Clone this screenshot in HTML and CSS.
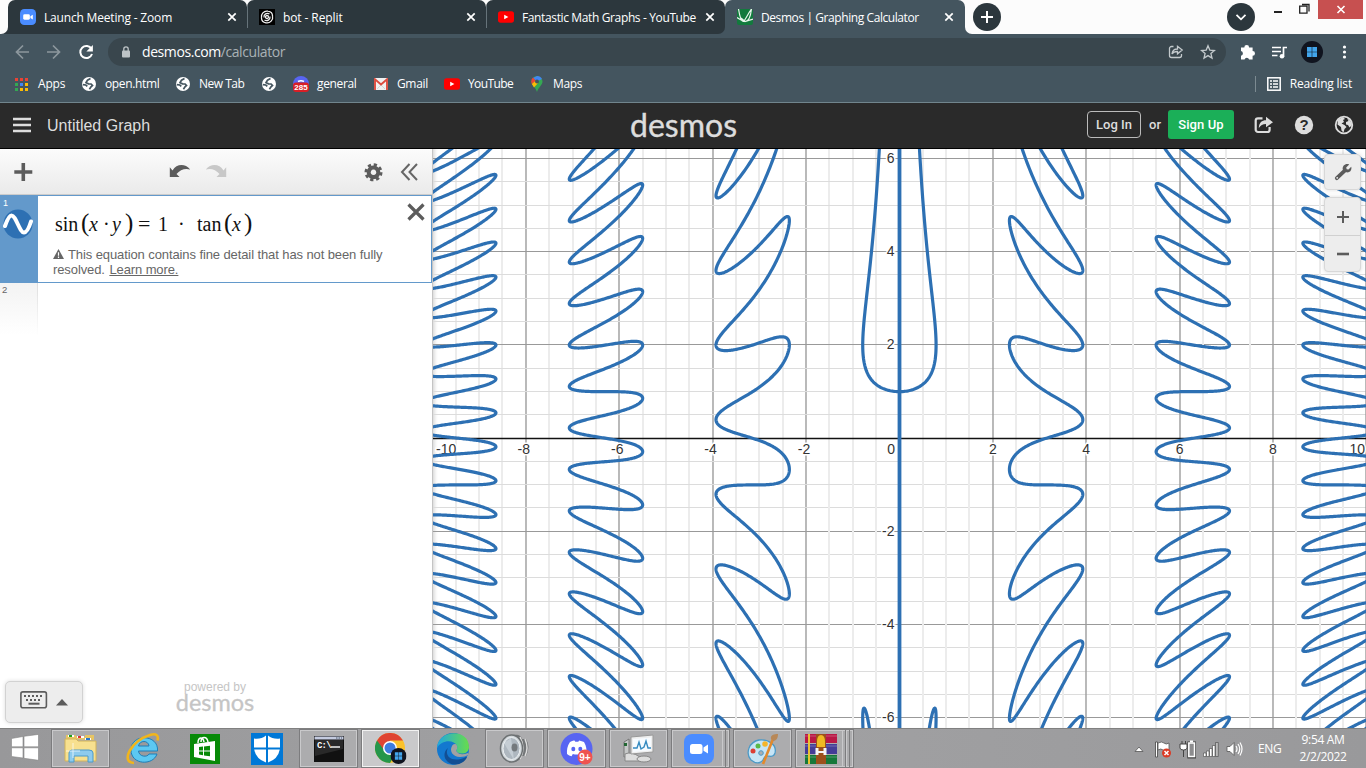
FILE: index.html
```html
<!DOCTYPE html>
<html lang="en">
<head>
<meta charset="utf-8">
<title>Desmos | Graphing Calculator</title>
<link rel="stylesheet" href="styles.css">
</head>
<body>
<svg class="defs" width="0" height="0">
  <symbol id="close" viewBox="0 0 10 10"><path d="M1.3 1.3l7.4 7.4M8.7 1.3L1.3 8.7" stroke="#fff" stroke-width="1.7"/></symbol>
  <symbol id="globe" viewBox="0 0 14 14"><circle cx="7" cy="7" r="7" fill="#fff"/><path d="M8.500 1.500L5.500 3.200 4 5.600l2.500 1.200 2.600.2 1.400 1.400-1.500 1.400-1.600 2.400M.8 7.600l3 .4 1.500 1.300" fill="none" stroke="#44555f" stroke-width="1.700"/></symbol>
  <symbol id="tube" viewBox="0 0 16 12"><rect y=".3" width="16" height="11.4" rx="2.6" fill="#f00"/><path d="M6.2 3.7v4.6L10.4 6z" fill="#fff"/></symbol>
  <symbol id="camera" viewBox="0 0 30 30"><rect width="30" height="30" rx="8" fill="#4a8cff"/><rect x="6" y="10" width="12.5" height="10" rx="2.5" fill="#fff"/><path d="M19.5 13.5L24 10.6v9L19.5 16.7z" fill="#fff"/></symbol>
  <symbol id="winlogo" viewBox="0 0 22 22"><circle cx="11" cy="11" r="11" fill="#10141f"/><path d="M6 6h4.7v4.7H6zM11.3 6H16v4.7h-4.7zM6 11.3h4.7V16H6zM11.3 11.3H16V16h-4.7z" fill="#42a5ec"/></symbol>
</svg>

<header class="tabstrip">
  <div class="edge-left"><i></i></div>
  <div class="tab"><svg width="16" height="16"><use href="#camera"/></svg><span class="t1">Launch Meeting - Zoom</span><svg class="x" width="10" height="10"><use href="#close"/></svg></div>
  <div class="tab split"><svg width="16" height="16" viewBox="0 0 16 16"><rect width="16" height="16" fill="#000"/><g fill="none" stroke="#eee" stroke-width="1.300"><circle cx="8" cy="8" r="1.500"/><path d="M5 8.500C4.500 5 8 3.500 10.500 5M11 7.500c.5 3.500-3 5-5.500 3.500M2.500 9C1.500 5 5 1.500 9 2.200M13.500 7c1 4-2.500 7.500-6.500 6.800M9 2.200c3 .5 4.500 2.500 4.500 4.800M7 13.800c-3-.5-4.500-2.500-4.500-4.800"/></g></svg><span class="t2">bot - Replit</span><svg class="x" width="10" height="10"><use href="#close"/></svg></div>
  <div class="tab split"><svg width="16" height="12"><use href="#tube"/></svg><span class="t3">Fantastic Math Graphs - YouTube</span><svg class="x" width="10" height="10"><use href="#close"/></svg></div>
  <div class="tab active"><svg width="16" height="16" viewBox="0 0 16 16"><rect width="16" height="16" rx="2" fill="#127a3d"/><path d="M1.500 0C2.500 6 4 12.500 6 12.500S10 6 14.500 0M0 8.500c3 1.500 5 4 8 4s5.500-4 6.500-12.500M4 9l4 3.500L16 10" fill="none" stroke="#e9f6ed" stroke-width="1.200"/></svg><span class="t4">Desmos | Graphing Calculator</span><svg class="x" width="10" height="10"><use href="#close"/></svg></div>
  <div class="edge-right">
    <svg class="newtab" width="28" height="28" viewBox="0 0 28 28"><circle cx="14" cy="14" r="14" fill="#2c373d"/><path d="M14 8v12M8 14h12" stroke="#fff" stroke-width="2"/></svg>
    <svg class="search" width="28" height="28" viewBox="0 0 28 28"><circle cx="14" cy="14" r="14" fill="#2c373d"/><path d="M9.500 11.800l4.500 4.500 4.500-4.500" fill="none" stroke="#fff" stroke-width="1.800"/></svg>
    <svg class="win" width="92" height="19" viewBox="0 0 92 19"><path d="M0 12h8" stroke="#222" stroke-width="2"/><path d="M25.700 6.200h7.300v7h-7.300zM28 4.500h7v7" fill="none" stroke="#222" stroke-width="1.300"/><path d="M44 0h45v19H44z" fill="#c75050"/><path d="M63.500 6l7 7M70.500 6l-7 7" stroke="#fff" stroke-width="1.600"/></svg>
  </div>
</header>

<div class="toolbar">
  <svg class="nav" width="80" height="16" viewBox="0 0 80 16"><g fill="none" stroke="#8c979d" stroke-width="1.700"><path d="M14 8H1.500M8 1.500L1.500 8 8 14.500M32 8h12.500M38 1.500L44.500 8 38 14.500"/></g><path d="M76.500 5A6 6 0 1 0 77 10" fill="none" stroke="#fff" stroke-width="2"/><path d="M77.900 1v6.500h-6.500z" fill="#fff"/></svg>
  <div class="omnibox">
    <svg width="10" height="12" viewBox="0 0 10 12"><rect x="1" y="4.500" width="8" height="7" rx="1" fill="#bdc3c6"/><path d="M2.800 5V3a2.200 2.200 0 0 1 4.400 0v2" fill="none" stroke="#bdc3c6" stroke-width="1.300"/></svg>
    <span class="url">desmos.com<em>/calculator</em></span>
    <svg class="omni-icons" width="48" height="16" viewBox="0 0 48 16"><g fill="none" stroke="#c3c9cc" stroke-width="1.300"><path d="M5.500 2.500H3.500a2 2 0 0 0-2 2v7a2 2 0 0 0 2 2h8a2 2 0 0 0 2-2v-1.500M4 10c.3-3.300 2-5 5.500-5V2.300L14.200 6 9.500 9.800V7.500C7 7.400 5.200 8.200 4 10z"/><path d="M40 1.800l1.800 4.300 4.600.4-3.500 3 1.100 4.600-4-2.500-4 2.500 1.100-4.600-3.500-3 4.600-.4z"/></g></svg>
  </div>
  <svg class="ext" width="110" height="22" viewBox="0 0 110 22"><path d="M1 6.500h3.300a2.400 2.400 0 0 1 4.800 0h3.500V10a2.400 2.400 0 0 1 0 4.800V18.500H9.100a2.400 2.400 0 0 0-4.600 0H1v-3.700a2.400 2.400 0 0 0 0-4.700z" fill="#fff"/><path d="M32 6.500h9M32 10.500h9M32 14.500h5.500M47 6.500h-3.500v9" fill="none" stroke="#fff" stroke-width="1.700"/><circle cx="42" cy="15.300" r="2.300" fill="#fff"/><use href="#winlogo" x="61" width="22" height="22"/><g fill="#fff"><circle cx="104.500" cy="6" r="1.600"/><circle cx="104.500" cy="11" r="1.600"/><circle cx="104.500" cy="16" r="1.600"/></g></svg>
</div>

<nav class="bookmarks">
  <div class="bm b1"><svg width="13" height="13" viewBox="0 0 13 13"><path d="M0 0h3v3H0zM5 0h3v3H5zM10 0h3v3h-3z" fill="#ea4335"/><path d="M0 5h3v3H0zM0 10h3v3H0z" fill="#34a853"/><path d="M5 5h3v3H5z" fill="#4285f4"/><path d="M10 5h3v3h-3zM5 10h3v3H5zM10 10h3v3h-3z" fill="#fbbc05"/></svg><span>Apps</span></div>
  <div class="bm b2"><svg width="14" height="14"><use href="#globe"/></svg><span>open.html</span></div>
  <div class="bm b3"><svg width="14" height="14"><use href="#globe"/></svg><span>New Tab</span></div>
  <div class="bm b4"><svg width="14" height="14"><use href="#globe"/></svg></div>
  <div class="bm b5"><svg width="16" height="16" viewBox="0 0 16 16"><circle cx="8" cy="8" r="8" fill="#5865f2"/><path d="M5 5.500q3-1.500 6 0" stroke="#fff" stroke-width="1.500" fill="none"/><rect y="6.500" width="16" height="9.500" rx="3" fill="#d81f26"/><text x="8" y="14.200" class="badge" text-anchor="middle">285</text></svg><span>general</span></div>
  <div class="bm b6"><svg width="14" height="12" viewBox="0 0 14 12"><rect width="14" height="12" rx="1" fill="#f1f1f1"/><path d="M3 11l4-4 4 4" stroke="#d5d5d5" fill="none"/><path d="M1 12V1.300l6 5.200 6-5.200V12" fill="none" stroke="#dd4b3e" stroke-width="1.900"/></svg><span>Gmail</span></div>
  <div class="bm b7"><svg width="16" height="12"><use href="#tube"/></svg><span>YouTube</span></div>
  <div class="bm b8"><svg width="12" height="16" viewBox="0 0 12 16"><path d="M6 0a5.600 5.600 0 0 0-5.500 5.500C.5 9 4.500 11 6 16c1.500-5 5.500-7 5.500-10.500A5.600 5.600 0 0 0 6 0z" fill="#34a853"/><path d="M6 0a5.600 5.600 0 0 1 5 3L6 5.500 2 2z" fill="#4285f4"/><path d="M2 1.600L5 5 .8 8A5.700 5.700 0 0 1 2 1.600z" fill="#ea4335"/><path d="M.8 8L5 4.500 7 7l-4 4.500z" fill="#fbbc05"/><circle cx="6" cy="5.600" r="2" fill="#44555f"/></svg><span>Maps</span></div>
  <div class="reading"><svg width="14" height="14" viewBox="0 0 14 14"><rect x=".8" y=".8" width="12.400" height="12.400" fill="none" stroke="#fff" stroke-width="1.500"/><path d="M3 4h2M6 4h5M3 7h2M6 7h5M3 10h2M6 10h5" stroke="#fff" stroke-width="1.500"/></svg><span>Reading list</span></div>
</nav>

<div class="appbar">
  <svg class="menu" width="18" height="16" viewBox="0 0 18 16"><path d="M.5 2h17M.5 8h17M.5 14h17" stroke="#ddd" stroke-width="2.400" stroke-linecap="round"/></svg>
  <h1>Untitled Graph</h1>
  <div class="logo">desmos</div>
  <div class="account">
    <a class="login">Log In</a><span class="or">or</span><a class="signup">Sign Up</a>
    <svg width="100" height="20" viewBox="0 0 100 20"><path d="M8.500 3.300H4a2.300 2.300 0 0 0-2.300 2.300v9.100A2.300 2.300 0 0 0 4 17h9.300a2.300 2.300 0 0 0 2.300-2.300V12" fill="none" stroke="#ddd" stroke-width="2.200"/><path d="M4.800 13C5 7.500 8 5.200 12 5.200V1.800l7 5.400-7 5V8.900c-3.500 0-5.200 1-7.200 4.100z" fill="#ddd"/><circle cx="50" cy="10" r="9.200" fill="#ddd"/><text x="50" y="15.300" text-anchor="middle" class="help">?</text><circle cx="90" cy="10" r="8.300" fill="none" stroke="#ddd" stroke-width="1.800"/><path d="M84 4.500l5-2.500 2 2-2 1 1 2-2.500 1.500 3 1.500 2 2-2 2-1 3.500-2-2-.5-3.500-3.500-2.500zM93 3l3.500 3 1.500 4-2.500 2.500-1.500-2.500-2-.5V7l2.500-1z" fill="#ddd"/></svg>
  </div>
</div>

<main>
  <section class="panel">
    <div class="tools">
      <svg width="432" height="45" viewBox="0 0 432 45"><path d="M23.300 14v18M14.300 23h18" stroke="#5c5c5c" stroke-width="3.600"/><path d="M169.800 18.300v9.700h9.700l-3-3c3.500-4.200 8.500-6 13.700-4.500-5-6-13.500-6-17.700 1z" fill="#5c5c5c"/><path d="M226.200 18.300v9.700h-9.700l3-3c-3.500-4.200-8.500-6-13.700-4.500 5-6 13.500-6 17.700 1z" fill="#c8c8c8"/><path fill-rule="evenodd" d="M373.500 16.500a6.800 6.800 0 1 0 .01 0zm0 4a2.800 2.800 0 1 1-.01 0z" fill="#5c5c5c"/><circle cx="373.500" cy="23.300" r="7.500" fill="none" stroke="#5c5c5c" stroke-width="3" stroke-dasharray="3.200 2.690"/><path d="M409.500 15l-7.500 8 7.500 8M417 15l-7.500 8 7.500 8" fill="none" stroke="#666" stroke-width="2"/></svg>
    </div>
    <div class="expr">
      <div class="side"><b>1</b><svg width="30" height="30" viewBox="0 0 30 30"><circle cx="15" cy="15" r="14.500" fill="#2d70b3"/><path d="M2 17C4.500 10 6.500 6.500 8.500 6.500 13 6.500 16.500 23.500 21 23.500 23.500 23.500 26 19 28 12.500" fill="none" stroke="#fff" stroke-width="4" stroke-linecap="round"/></svg></div>
      <div class="body">
        <div class="math"><span class="m-sin">sin</span><span class="par">(</span><i class="m-x">x</i><span class="m-dot">·</span><i class="m-y">y</i><span class="par m-close">)</span><span class="m-eq">=</span><span class="m-one">1</span><span class="m-dot2">·</span><span class="m-tan">tan</span><span class="par">(</span><i class="m-x2">x</i><span class="par">)</span></div>
        <svg class="remove" width="18" height="18" viewBox="0 0 18 18"><path d="M1.500 1.500l15 15M16.500 1.500l-15 15" stroke="#5c5c5c" stroke-width="3.200"/></svg>
        <p class="warn"><svg width="11" height="10" viewBox="0 0 11 10"><path d="M5.500 0L11 10H0z" fill="#666"/><path d="M5.500 3.200v3.500M5.500 7.600v1.300" stroke="#fff" stroke-width="1.200"/></svg><span>This equation contains fine detail that has not been fully</span><br><span>resolved.</span> <a>Learn more.</a></p>
      </div>
    </div>
    <div class="next">2</div>
    <div class="foot">
      <div class="keypad"><svg width="48" height="18" viewBox="0 0 48 18"><rect x=".9" y=".9" width="25.500" height="15.800" rx="2" fill="none" stroke="#5c5c5c" stroke-width="1.600"/><path d="M4 5h20M6 9h16" stroke="#5c5c5c" stroke-width="2" stroke-dasharray="2 2"/><path d="M8.500 12.700h11" stroke="#5c5c5c" stroke-width="2"/><path d="M36 14.500l6-6.500 6 6.500z" fill="#5c5c5c"/></svg></div>
      <div class="powered"><span>powered by</span><b>desmos</b></div>
    </div>
  </section>
  <section class="graph">
    <svg id="plot" width="933" height="579" viewBox="433 149 933 579"></svg>
    <div class="gbtn wrench"><svg width="18" height="18" viewBox="0 0 18 18"><path d="M2.800 15.200L10.500 7.800" stroke="#5c5c5c" stroke-width="3.800" stroke-linecap="round"/><path d="M15.200 1.500l-3 3 .5 1.700 1.800.4 2.700-2.800c1 3-1.200 6.200-4.700 5.500-3.800-.4-5-4-2.800-6.700 1.300-1.500 3.600-2 5.500-1.100z" fill="#5c5c5c"/><circle cx="3.200" cy="14.800" r=".9" fill="#ededed"/></svg></div>
    <div class="gbtn zoomer"><div><svg width="12" height="12"><path d="M6 0v12M0 6h12" stroke="#5c5c5c" stroke-width="2"/></svg></div><div><svg width="12" height="12"><path d="M0 6h12" stroke="#5c5c5c" stroke-width="2.600"/></svg></div></div>
  </section>
</main>

<footer class="taskbar">
  <div class="start"><svg width="28" height="27" viewBox="0 0 28 27"><path d="M.5 4.500l11.500-2v10.300H.5zM13 2.300L27.500.4v12.400H13zM.5 13.800H12V24L.5 22.500zM13 13.800h14.500v12.500L13 24.300z" fill="#fff" stroke="#858585" stroke-width=".6"/></svg></div>
  <div class="app open"><svg width="34" height="32" viewBox="0 0 34 32"><path d="M2 6V2h9l2 2h8V2h9v5z" fill="#e7c564"/><path d="M4 3h6M13 4h7M21 6h6" stroke="#fff" stroke-width="2"/><path d="M5 2h3v2H5z" fill="#1ba01b"/><path d="M14 3h3v2h-3z" fill="#d33"/><path d="M22 5h4v2h-4z" fill="#2878d0"/><path d="M1 6h11l2 2h18v20H1z" fill="#f7e08f" stroke="#d2b35a"/><path d="M5 29v-9q0-3 3-3h17q4 0 4 3v9h-5v-6H10v6z" fill="#8ecbed" stroke="#4d9ac9"/><path d="M9 10v15M2 18h14" stroke="#fff" opacity=".7"/></svg></div>
  <div class="app"><svg width="34" height="34" viewBox="0 0 34 34"><path fill-rule="evenodd" d="M31 22h-8c-1.500 3.500-10 3-10.500-3H31.500C33 2 5 1 5 18c0 15 22 16 26 4zM12.500 14c1-6 10-6 10.500 0z" fill="#5cc8f2" stroke="#1f7fb8"/><path d="M8 31C-6 30 5 9 24 3c6-2 9 0 7.500 5.500" fill="none" stroke="#f1b51c" stroke-width="2.600"/></svg></div>
  <div class="app"><svg width="30" height="30" viewBox="0 0 30 30"><path d="M0 0h30v30H0z" fill="#078a07"/><path d="M4 10l21-3v20L4 23z" fill="#fff"/><path d="M8 9c0-6 5-7 6-1m-3 0c0-6 6-6 7 0" fill="none" stroke="#fff" stroke-width="1.500"/><path d="M9 13l4-.5v4H9zM14 12.400l6-.7v4.800h-6zM9 17.500h4v3.700l-4-.6zM14 17.500h6v4.800l-6-.8z" fill="#078a07"/></svg></div>
  <div class="app"><svg width="32" height="32" viewBox="0 0 32 32"><path d="M0 0h32v32H0z" fill="#0078d7"/><path d="M15 2.500v12H3V5.500q7 1 12-3zM17 2.500q5 4 12 3v9H17zM3.200 16.500H15v13Q5 26 3.200 16.500zM17 16.500h11.800Q27 26 17 29.500z" fill="#fff"/></svg></div>
  <div class="app open"><svg width="30" height="26" viewBox="0 0 30 26"><rect width="30" height="26" fill="#111"/><path d="M.5.5h29v3H.5z" fill="#c4cbe0"/><path d="M22 2h6" stroke="#456" stroke-dasharray="1.500 1"/><path d="M1 4h28v9L1 20z" fill="#292929"/><text x="3" y="11.500" class="cmd">C:\</text><path d="M17 11h9" stroke="#fff" stroke-width="1.400"/></svg></div>
  <div class="app open current"><svg width="32" height="32" viewBox="0 0 32 32"><circle cx="15" cy="15" r="15" fill="#fbc22b"/><path d="M15 15L2 7.500A15 15 0 0 0 15 30l6.500-11z" fill="#25964b"/><path d="M2 7.500A15 15 0 0 1 28 7.500H15L9 17z" fill="#df4433"/><circle cx="15" cy="15" r="7" fill="#fff"/><circle cx="15" cy="15" r="5.500" fill="#3e7de0"/><use href="#winlogo" x="15.500" y="15" width="16" height="16"/></svg></div>
  <div class="app"><svg width="34" height="34" viewBox="0 0 34 34"><defs><linearGradient id="e1"><stop stop-color="#20a7e0"/><stop offset="1" stop-color="#68dd4b"/></linearGradient></defs><circle cx="17" cy="17" r="16" fill="#1378cf"/><path d="M1 16C2-3 33-4 33 15c0 7-8 8-12 5-2-2 1-2 0-6C18 7 5 8 1 16z" fill="url(#e1)"/><path d="M12 16c-4 7 3 16 18 9l1 .5C27 33 16 35 11 29c-4-4-3-10 1-13z" fill="#124f94"/><path d="M16 14c-3 5 1 11 8 11 4 0 6-1 8-2v-2q-8 3-11-1c-2-2 1-2 0-6-1-3-4-2-5 0z" fill="#a1a1a3"/></svg></div>
  <div class="app open"><svg width="32" height="32" viewBox="0 0 32 32"><path d="M14 2c6-1 8 1 9 4h4q5 8 0 17h-4q-3 6-9 6z" fill="#737678"/><path d="M21 4q6 11 0 22M26 6q4 9 0 17" stroke="#ddd" stroke-width="1.500" fill="none"/><ellipse cx="12.500" cy="15.500" rx="11" ry="13.500" fill="#d2d8dc" stroke="#6d7173" stroke-width="1.500"/><ellipse cx="12.500" cy="15.500" rx="8.500" ry="11" fill="#aeb7bf" stroke="#eef1f3"/><path d="M12 5l3 22L5 10z" fill="#d4dce3" opacity=".6"/><ellipse cx="15.500" cy="14.500" rx="3" ry="4" fill="#74797d"/></svg></div>
  <div class="app open"><svg width="34" height="32" viewBox="0 0 34 32"><circle cx="16.500" cy="16" r="16" fill="#5865f2"/><path d="M10 9q3-2 4.500-1.500l.8 1.200h3l.8-1.200Q22 8 24 9q3 5 2.500 12-2.500 2-4.500 2.200l-1.200-2.200q-4 1-8 0L11.600 23.200Q9 23 7 21q-.5-7 3-12z" fill="#fff"/><ellipse cx="13.300" cy="16" rx="2" ry="2.300" fill="#5865f2"/><ellipse cx="20.300" cy="16" rx="2" ry="2.300" fill="#5865f2"/><circle cx="25" cy="24" r="7.500" fill="#ef5350"/><text x="25" y="27.500" text-anchor="middle" class="count">9+</text></svg></div>
  <div class="app open"><svg width="34" height="30" viewBox="0 0 34 30"><path d="M2 8l5-3v17l-5 1z" fill="#c6c8c8" stroke="#777"/><path d="M2 9h3v3H2z" fill="#263"/><path d="M3 20q6-3 15 3v4H3z" fill="#ddd" stroke="#888"/><path d="M9 3l22-2v17L9 20z" fill="#eee" stroke="#999"/><path d="M11 5l18-1.500v13L11 18z" fill="#f7fbff"/><path d="M11 14h4l2-6 2 7 3-2 2-6 2 7h3" fill="none" stroke="#368bc1" stroke-width="1.400"/><ellipse cx="22" cy="25" rx="7" ry="3" fill="#ddd" stroke="#888"/></svg></div>
  <div class="app open stack1"><svg width="30" height="30"><use href="#camera"/></svg></div>
  <div class="app open"><svg width="34" height="34" viewBox="0 0 34 34"><path d="M5 28C-1 21 3 10 13 8c10-1 18 5 16 13-2 7-9 0-11 5s-7 7-13 2z" fill="#c7e5f6" stroke="#4c9ac7" stroke-width="1.300"/><circle cx="7" cy="19" r="2.500" fill="#dc3e34"/><circle cx="12" cy="14" r="2.500" fill="#58b948"/><circle cx="19" cy="12" r="2.800" fill="#f5b529"/><circle cx="15" cy="21" r="2.300" fill="#a9afb2" stroke="#4c9ac7"/><path d="M17 32L27 7" stroke="#e28a2c" stroke-width="2.600"/><path d="M25 7c-1-4 3-5 7-5 0 3-1 7-5 7z" fill="#b88858"/></svg></div>
  <div class="app open stack2"><svg width="32" height="30" viewBox="0 0 32 30"><path d="M0 0h32v9H0z" fill="#b91846"/><path d="M0 10h32v10H0z" fill="#453c97"/><path d="M0 21h32v9H0z" fill="#16783a"/><path d="M0 2h32M0 12h32M0 23h32" stroke="#fff" opacity=".25"/><path d="M4 0v30" stroke="#eac231" stroke-width="2"/><path d="M11 0h10v30H11z" fill="#9c501c"/><path d="M12 8q0-7 4-7t4 7v5h-8z" fill="#f0b923"/><path d="M10.500 14h3v3h5v-3h3v7h-3v-2h-5v2h-3z" fill="#f5f5f5"/></svg></div>
  <div class="tray">
    <svg width="110" height="20" viewBox="0 0 110 20"><path d="M1 12.500l4-4.500 4 4.500z" fill="#fff" stroke="#555" stroke-width=".8"/><path d="M23.500 3v15h-2V3z" fill="#fff" stroke="#444" stroke-width=".8"/><path d="M24 4q4-2 6 0t5 0v8q-4 1-6-1t-5 0z" fill="#fff" stroke="#555" stroke-width=".8"/><circle cx="32.500" cy="14" r="4.500" fill="#db3a25"/><path d="M30.500 12l4 4M34.500 12l-4 4" stroke="#fff" stroke-width="1.500"/><path d="M46 5h7v4q0 2-3.500 2T46 9zM48 2v3M51.500 2v3M49.500 11v7" stroke="#444" fill="#fff"/><path d="M54.800 4h5.700v14h-5.700z" fill="#8c8c8e" stroke="#444" stroke-width="3"/><path d="M54.800 4h5.700v13.500h-5.700z" fill="#8c8c8e" stroke="#fff" stroke-width="1.500"/><path d="M56 2.500h3" stroke="#fff" stroke-width="2"/><g stroke="#444" stroke-width=".6" fill="#fff"><path d="M69.500 14h2.500v3.500h-2.500zM72.500 12H75v5.500h-2.500zM75.500 9.500H78v8h-2.500zM78.500 6.500H81v11h-2.500z"/><path d="M81.500 3.500H84.300v14H81.500z" fill="#bbb"/></g><path d="M93 7.500h3l4-4v13l-4-4h-3z" fill="#fff" stroke="#555" stroke-width=".8"/><path d="M102 7q2 3 0 6M104 5q3.500 5 0 10M106 3.500q4 6.500 0 13" fill="none" stroke="#fff" stroke-width="1.200"/></svg>
    <span class="lang">ENG</span>
    <div class="clock"><span>9:54 AM</span><span>2/2/2022</span></div>
  </div>
</footer>
<script src="script.js"></script>
</body>
</html>
```
FILE: styles.css
```css
* { box-sizing: border-box; }
body { margin: 0; width: 1366px; height: 768px; overflow: hidden; display: flex; flex-direction: column; background: #fff; font-family: "Open Sans", "Noto Sans", sans-serif; font-size: 12px; color: #fff; }
.defs { position: absolute; }
svg { display: block; flex: none; }
span, a { white-space: nowrap; }

.tabstrip { height: 34px; display: flex; flex: none; background: #44555f; position: relative; z-index: 0; }
.edge-left { width: 8px; background: #2c373d; }
.edge-left i { display: block; height: 34px; background: #fcfcfc; border-bottom-right-radius: 7px; }
.tab { width: 239px; padding: 0 10px 0 12px; display: flex; align-items: center; background: #2c373d; position: relative; border-radius: 7px 7px 0 0; }
.tab::before { content: ""; position: absolute; z-index: -1; left: 0; right: 0; top: 0; height: 8px; background: #fcfcfc; }
.tab:nth-child(4) { border-bottom-right-radius: 7px; }
.tab.active { background: #44555f; width: 240px; padding-right: 11px; }
.split::after { content: ""; position: absolute; left: 0; top: 6px; height: 22px; border-left: 1px solid #66737a; }
.tab span { margin-left: 8px; }
.tab .x { margin-left: auto; }
.t1 { letter-spacing: -.18px; }
.t2 { letter-spacing: -.1px; }
.t3 { letter-spacing: -.37px; }
.t4 { letter-spacing: -.42px; }
.edge-right { flex: 1; display: flex; align-items: flex-start; background: #fcfcfc; border-bottom-left-radius: 7px; }
.newtab { margin: 3px 0 0 8px; }
.search { margin: 3px 0 0 226px; }
.win { margin-left: 19px; }

.toolbar { height: 36px; flex: none; background: #44555f; display: flex; align-items: center; }
.nav { margin-left: 15px; }
.omnibox { margin-left: 13px; width: 1118px; height: 28px; border-radius: 14px; background: #39464d; display: flex; align-items: center; padding-left: 13px; font-size: 14px; }
.url { margin: -2px 0 0 11px; letter-spacing: -.42px; }
.url em { font-style: normal; color: #a9b2b6; }
.omni-icons { margin: 0 10px 0 auto; }
.ext { margin-left: 14px; }

.bookmarks { height: 33px; padding: 0 14px 4px 15px; flex: none; background: #44555f; border-bottom: 1px solid #71858d; display: flex; align-items: center; letter-spacing: -.35px; }
.bm { display: flex; align-items: center; gap: 9px; }
.bm span, .reading span { margin-top: -1px; }
.b1 { width: 67px; gap: 10px; letter-spacing: -.2px; }
.b2 { width: 94px; }
.b3 { width: 86px; letter-spacing: -.5px; }
.b4 { width: 31px; }
.b5 { width: 81px; gap: 8px; }
.b6 { width: 70px; }
.b7 { width: 87px; gap: 8px; letter-spacing: -.6px; }
.b8 { gap: 10px; }
.badge { font: bold 8px "Liberation Sans", sans-serif; fill: #fff; letter-spacing: 0; }
.reading { margin-left: auto; height: 16px; border-left: 1px solid #7c8a91; padding-left: 11px; display: flex; align-items: center; gap: 9px; letter-spacing: -.17px; }

.appbar { height: 46px; flex: none; background: #2a2a2a; border-bottom: 1px solid #000; display: flex; align-items: center; font-family: "Liberation Sans", Arial, sans-serif; color: #ddd; }
.menu { margin-left: 13px; margin-top: -1px; }
.appbar h1 { width: 583px; margin: 0 0 0 16px; font-size: 16px; font-weight: 400; }
.logo { font: 400 32px/32px Lato, sans-serif; color: #ddd; width: 108px; margin-top: -2px; -webkit-text-stroke: .4px #ddd; }
.account { margin-left: auto; display: flex; align-items: center; margin-right: 12px; font-family: Roboto, sans-serif; font-size: 14px; font-weight: 500; margin-top: -2px; }
.login { width: 54px; height: 27px; border: 1px solid #bbb; border-radius: 4px; text-align: center; line-height: 25px; font-size: 13px; }
.or { width: 27px; padding-left: 8px; font-size: 13px; }
.signup { width: 66px; height: 29px; border-radius: 3px; background: #1baf58; color: #fff; text-align: center; line-height: 29px; font-size: 13px; letter-spacing: .1px; }
.account svg { margin-left: 20px; }
.help { font: bold 15px "Liberation Sans", sans-serif; fill: #2a2a2a; }

main { height: 579px; flex: none; display: flex; color: #666; font-family: "Liberation Sans", Arial, sans-serif; }
.panel { width: 433px; border-right: 1px solid #c4c4c4; display: flex; flex-direction: column; background: #fff; }
.tools { height: 46px; background: linear-gradient(#fcfcfc, #eaeaea); border-bottom: 1px solid #ccc; }
.expr { height: 88px; display: flex; border: 1px solid #6399cb; border-left: 0; }
.side { width: 38px; background: #6399cb; color: #fff; padding: 2px 3px; }
.side b { display: block; font-size: 9px; line-height: 10px; height: 11px; font-weight: 400; }
.body { flex: 1; display: grid; grid-template-columns: 1fr 18px; padding-right: 6px; align-content: start; }
.math { display: flex; align-items: center; height: 50px; padding: 5px 0 0 17px; font: 20px/30px "Liberation Serif", serif; color: #111; }
.math span, .math i { flex: none; }
.m-sin { width: 26px; }
.par { width: 8px; font-size: 25px; margin-top: -2px; }
.m-x { width: 14px; }
.m-dot { width: 9px; }
.m-y { width: 13px; }
.math .m-close { width: 13px; }
.m-eq { width: 20px; font-size: 22px; }
.m-one { width: 20px; }
.m-dot2 { width: 19px; }
.m-tan { width: 27px; }
.m-x2 { width: 12px; }
.remove { margin-top: 7px; }
.warn { grid-column: 1 / 3; margin: 1px 0 0 15px; font-size: 13px; line-height: 15px; color: #666; letter-spacing: -.1px; }
.warn svg { display: inline-block; margin-right: 4px; vertical-align: 0; }
.warn a { text-decoration: underline; margin-left: 1px; }
.next { width: 38px; height: 52px; padding: 2px 0 0 2px; font-size: 9.500px; line-height: 10px; border-right: 1px solid; border-image: linear-gradient(#ddd, #fff) 1; background: linear-gradient(#f3f3f3, #fff); }
.foot { margin-top: auto; display: flex; height: 47px; padding-left: 5px; }
.keypad { width: 78px; height: 42px; background: #ededed; border: 1px solid #d2d2d2; border-radius: 5px; box-shadow: 0 0 4px #ddd; padding: 9px 0 0 14px; }
.powered { margin-left: 93px; width: 78px; display: flex; flex-direction: column; align-items: center; color: #c5c5c5; font-size: 12px; line-height: 13px; }
.powered b { font: 400 23.500px/17px Lato, sans-serif; -webkit-text-stroke: .3px #c5c5c5; }

.graph { width: 933px; position: relative; overflow: hidden; box-shadow: inset 4px 0 4px -3px #ccc; }
.curve { fill: none; stroke: #2d70b3; stroke-width: 3.2; stroke-linejoin: round; }
.axis-label { font: 14px "Liberation Sans", Arial, sans-serif; fill: #333; stroke: #fff; stroke-width: 3px; paint-order: stroke; }
.gbtn { position: absolute; right: 5px; width: 37px; background: #ededed; border: 1px solid #d8d8d8; border-radius: 4px; box-shadow: 0 0 4px rgba(0,0,0,.15); }
.wrench { top: 5px; height: 36px; display: grid; place-items: center; }
.zoomer { top: 48px; height: 75px; }
.zoomer div { height: 37px; display: grid; place-items: center; }
.zoomer div + div { height: 37px; border-top: 1px solid #d0d0d0; }

.taskbar { height: 40px; flex: none; background: linear-gradient(90deg, #98989a, #a2a2a4 50%, #99999b); border-top: 1px solid #808080; display: flex; }
.start { width: 51px; padding: 5px 0 0 11px; }
.app { width: 59px; margin-right: 3px; height: 39px; display: grid; place-items: center; position: relative; }
.open { border: 1px solid #7c7c7e; background: #acacae; box-shadow: inset 0 0 0 1px #c9c9cb; }
.current { background: #c9c9cb; box-shadow: inset 0 0 0 1px #f2f2f2; }
.stack1 { padding-right: 4px; }
.stack1::after, .stack2::after, .stack2::before { content: ""; position: absolute; right: 3px; top: 0; bottom: 0; border-left: 1px solid #c9c9cb; border-right: 1px solid #7c7c7e; width: 2px; }
.stack2 { padding-right: 8px; }
.stack2::before { right: 7px; }
.cmd { font: bold 9px "Liberation Mono", monospace; fill: #fff; letter-spacing: -.8px; }
.count { font: bold 10px "Liberation Sans", sans-serif; fill: #fff; }
.tray { margin-left: auto; display: flex; align-items: center; width: 232px; }
.lang { margin-left: 14px; width: 37px; letter-spacing: -.3px; }
.clock { width: 56px; text-align: center; line-height: 17px; letter-spacing: -.35px; margin-top: -1px; }
.clock span { display: block; }
```
FILE: script.js
```js
// Plots sin(xy) = tan(x). With t = xy, every branch n satisfies
// x = n*pi + atan(sin t), y = t / x.
const svg = document.getElementById('plot');
const OX = 899.4, OY = 438.3, UNIT = 46.7;
const px = x => OX + x * UNIT;
const py = y => OY - y * 46.65;
const gridRow = y => Math.floor(438 - y * 46.6);
let out = '';

for (let k = -20; k <= 20; k++) {
  if (!k) continue;
  const major = k % 4 === 0;
  const gx = Math.round(px(k / 2));
  const gy = gridRow(k / 2) + 0.5;
  out += `<path d="M433 ${gy}H1366" stroke="${major ? '#999' : '#dcdcdc'}"/>`;
  out += major
    ? `<path d="M${gx} 149V728" stroke="#9c9c9c" stroke-width="1.4"/>`
    : `<path d="M${gx} 149V728" stroke="#ececec" stroke-width="2"/>`;
}
out += `<path d="M433 438.500H1366M899.500 149V728" stroke="#111" stroke-width="1.600"/>`;

const branch = (n, from, to) => {
  let d = '';
  for (let t = from; t <= to; t += 0.03) {
    const x = n * Math.PI + Math.atan(Math.sin(t));
    const y = Math.abs(x) < 1e-9 ? 1 : t / x;
    if (Math.abs(y) > 9) continue;
    d += (d ? 'L' : 'M') + px(x).toFixed(2) + ' ' + py(y).toFixed(2);
  }
  return `<path class="curve" d="${d}"/>`;
};

const label = (x, y, text, anchor) =>
  `<text class="axis-label" x="${x}" y="${y}" text-anchor="${anchor}">${text}</text>`;
for (const v of [-8, -6, -4, -2, 2, 4, 6, 8]) out += label(px(v) - (v < 0 ? 2 : 0), 454, v, 'middle');
out += label(436, 454, '-10', 'start') + label(1365, 454, '10', 'end') + label(895, 454, '0', 'end');
for (const v of [-6, -4, -2, 2, 4, 6]) out += label(894.5, gridRow(v) + 5, v, 'end');

for (const n of [-4, -3, -2, -1, 1, 2, 3, 4]) out += branch(n, -110, 110);
out += branch(0, -Math.PI + 0.001, Math.PI);
out += branch(0, Math.PI + 0.01, 2 * Math.PI);
out += branch(0, -2 * Math.PI + 0.01, -Math.PI);
out += '<path class="curve" d="M899.500 149V728" style="stroke-width:3.800"/>';
svg.innerHTML = out;
```
